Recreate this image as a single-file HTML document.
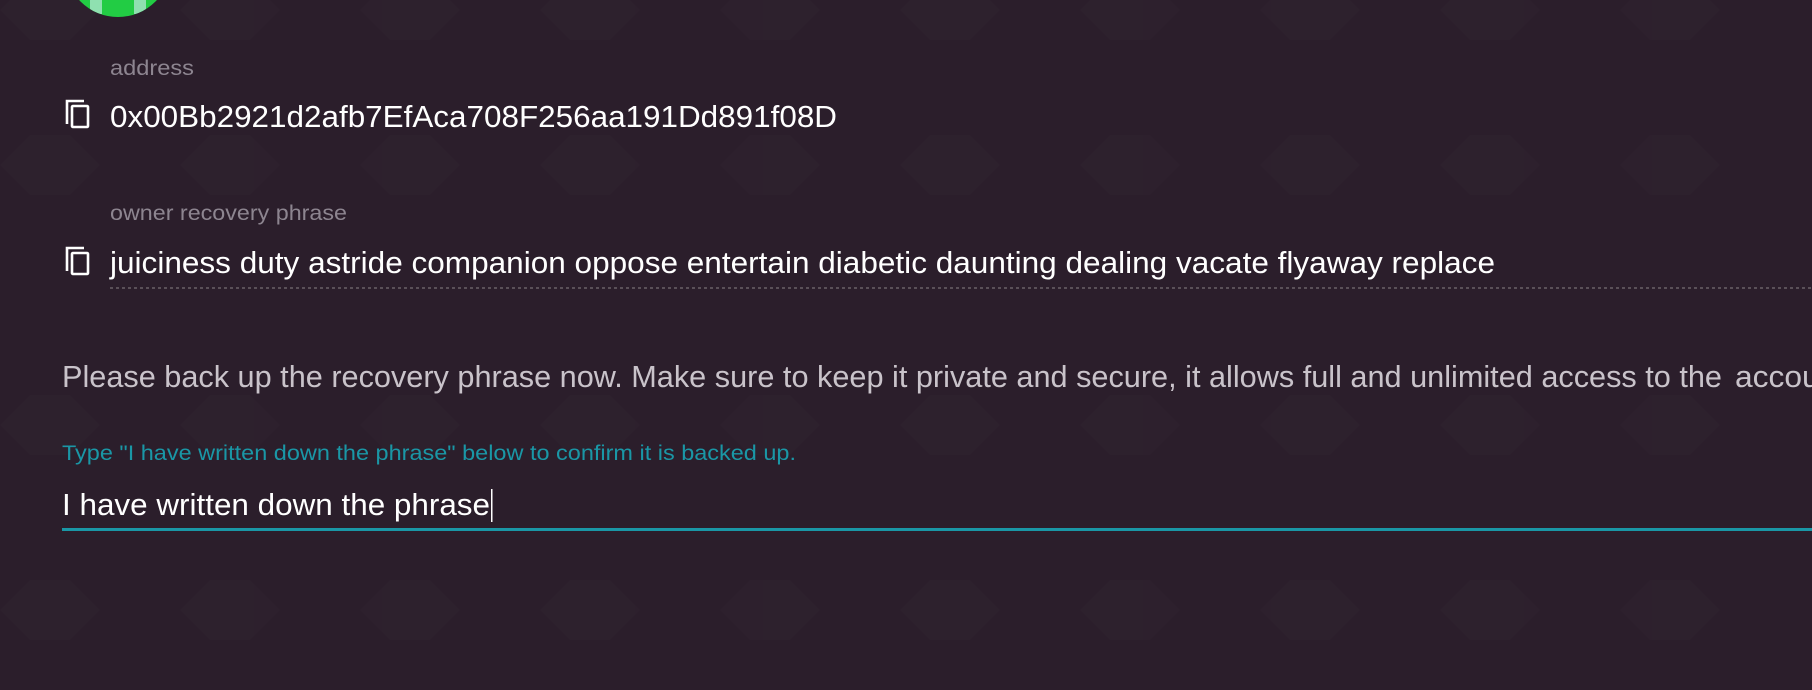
<!DOCTYPE html>
<html><head><meta charset="utf-8"><style>
html,body{margin:0;padding:0;background:#2b1e2b;width:1812px;height:690px;overflow:hidden}
svg{display:block}
text{font-family:"Liberation Sans",Arial,sans-serif}
</style></head><body>
<svg width="1812" height="690" viewBox="0 0 1812 690" xmlns="http://www.w3.org/2000/svg">
<rect width="1812" height="690" fill="#2b1e2b"/>
<g fill="#2f222f" opacity="0.7">
  <polygon points="0,10 30,-20 70,-20 100,10 70,40 30,40"/>
  <polygon points="180,10 210,-20 250,-20 280,10 250,40 210,40"/>
  <polygon points="360,10 390,-20 430,-20 460,10 430,40 390,40"/>
  <polygon points="540,10 570,-20 610,-20 640,10 610,40 570,40"/>
  <polygon points="720,10 750,-20 790,-20 820,10 790,40 750,40"/>
  <polygon points="900,10 930,-20 970,-20 1000,10 970,40 930,40"/>
  <polygon points="1080,10 1110,-20 1150,-20 1180,10 1150,40 1110,40"/>
  <polygon points="1260,10 1290,-20 1330,-20 1360,10 1330,40 1290,40"/>
  <polygon points="1440,10 1470,-20 1510,-20 1540,10 1510,40 1470,40"/>
  <polygon points="1620,10 1650,-20 1690,-20 1720,10 1690,40 1650,40"/>
  <polygon points="0,165 30,135 70,135 100,165 70,195 30,195"/>
  <polygon points="180,165 210,135 250,135 280,165 250,195 210,195"/>
  <polygon points="360,165 390,135 430,135 460,165 430,195 390,195"/>
  <polygon points="540,165 570,135 610,135 640,165 610,195 570,195"/>
  <polygon points="720,165 750,135 790,135 820,165 790,195 750,195"/>
  <polygon points="900,165 930,135 970,135 1000,165 970,195 930,195"/>
  <polygon points="1080,165 1110,135 1150,135 1180,165 1150,195 1110,195"/>
  <polygon points="1260,165 1290,135 1330,135 1360,165 1330,195 1290,195"/>
  <polygon points="1440,165 1470,135 1510,135 1540,165 1510,195 1470,195"/>
  <polygon points="1620,165 1650,135 1690,135 1720,165 1690,195 1650,195"/>
  <polygon points="0,425 30,395 70,395 100,425 70,455 30,455"/>
  <polygon points="180,425 210,395 250,395 280,425 250,455 210,455"/>
  <polygon points="360,425 390,395 430,395 460,425 430,455 390,455"/>
  <polygon points="540,425 570,395 610,395 640,425 610,455 570,455"/>
  <polygon points="720,425 750,395 790,395 820,425 790,455 750,455"/>
  <polygon points="900,425 930,395 970,395 1000,425 970,455 930,455"/>
  <polygon points="1080,425 1110,395 1150,395 1180,425 1150,455 1110,455"/>
  <polygon points="1260,425 1290,395 1330,395 1360,425 1330,455 1290,455"/>
  <polygon points="1440,425 1470,395 1510,395 1540,425 1510,455 1470,455"/>
  <polygon points="1620,425 1650,395 1690,395 1720,425 1690,455 1650,455"/>
  <polygon points="0,610 30,580 70,580 100,610 70,640 30,640"/>
  <polygon points="180,610 210,580 250,580 280,610 250,640 210,640"/>
  <polygon points="360,610 390,580 430,580 460,610 430,640 390,640"/>
  <polygon points="540,610 570,580 610,580 640,610 610,640 570,640"/>
  <polygon points="720,610 750,580 790,580 820,610 790,640 750,640"/>
  <polygon points="900,610 930,580 970,580 1000,610 970,640 930,640"/>
  <polygon points="1080,610 1110,580 1150,580 1180,610 1150,640 1110,640"/>
  <polygon points="1260,610 1290,580 1330,580 1360,610 1330,640 1290,640"/>
  <polygon points="1440,610 1470,580 1510,580 1540,610 1510,640 1470,640"/>
  <polygon points="1620,610 1650,580 1690,580 1720,610 1690,640 1650,640"/>
</g>
<clipPath id="av"><circle cx="118" cy="-36" r="53"/></clipPath>
<g clip-path="url(#av)">
  <rect x="60" y="-100" width="120" height="120" fill="#22cc44"/>
  <rect x="90" y="0" width="12" height="14" fill="#8fe0b0"/>
  <rect x="134" y="0" width="12" height="14" fill="#8fe0b0"/>
</g>
<g fill="none" stroke="#ffffff" stroke-width="2.6">
  <path d="M67 124 V101 H84"/>
  <rect x="72" y="106" width="16" height="21" rx="1"/>
  <path d="M67 271 V248 H84"/>
  <rect x="72" y="253" width="16" height="21" rx="1"/>
</g>
<text x="110" y="75" font-size="21" fill="#8d8590" textLength="84" lengthAdjust="spacingAndGlyphs">address</text>
<text x="110" y="127" font-size="31" fill="#ffffff" textLength="727" lengthAdjust="spacingAndGlyphs">0x00Bb2921d2afb7EfAca708F256aa191Dd891f08D</text>
<text x="110" y="220" font-size="21" fill="#8d8590" textLength="237" lengthAdjust="spacingAndGlyphs">owner recovery phrase</text>
<text x="110" y="273" font-size="31" fill="#ffffff" textLength="1385" lengthAdjust="spacingAndGlyphs">juiciness duty astride companion oppose entertain diabetic daunting dealing vacate flyaway replace</text>
<line x1="110" y1="288" x2="1812" y2="288" stroke="#5a5058" stroke-width="2" stroke-dasharray="3,3"/>
<text x="62" y="387" font-size="31" fill="#c9c3ca" textLength="1660" lengthAdjust="spacingAndGlyphs">Please back up the recovery phrase now. Make sure to keep it private and secure, it allows full and unlimited access to the</text>
<text x="1735" y="387" font-size="31" fill="#c9c3ca" textLength="120" lengthAdjust="spacingAndGlyphs">account.</text>
<text x="62" y="460" font-size="21" fill="#1a97a6" textLength="734" lengthAdjust="spacingAndGlyphs">Type "I have written down the phrase" below to confirm it is backed up.</text>
<text x="62" y="515" font-size="31" fill="#ffffff" textLength="428" lengthAdjust="spacingAndGlyphs">I have written down the phrase</text>
<rect x="491" y="489" width="1.5" height="33" fill="#ffffff"/>
<rect x="62" y="528" width="1750" height="3" fill="#1a97a6"/>
</svg>
</body></html>
